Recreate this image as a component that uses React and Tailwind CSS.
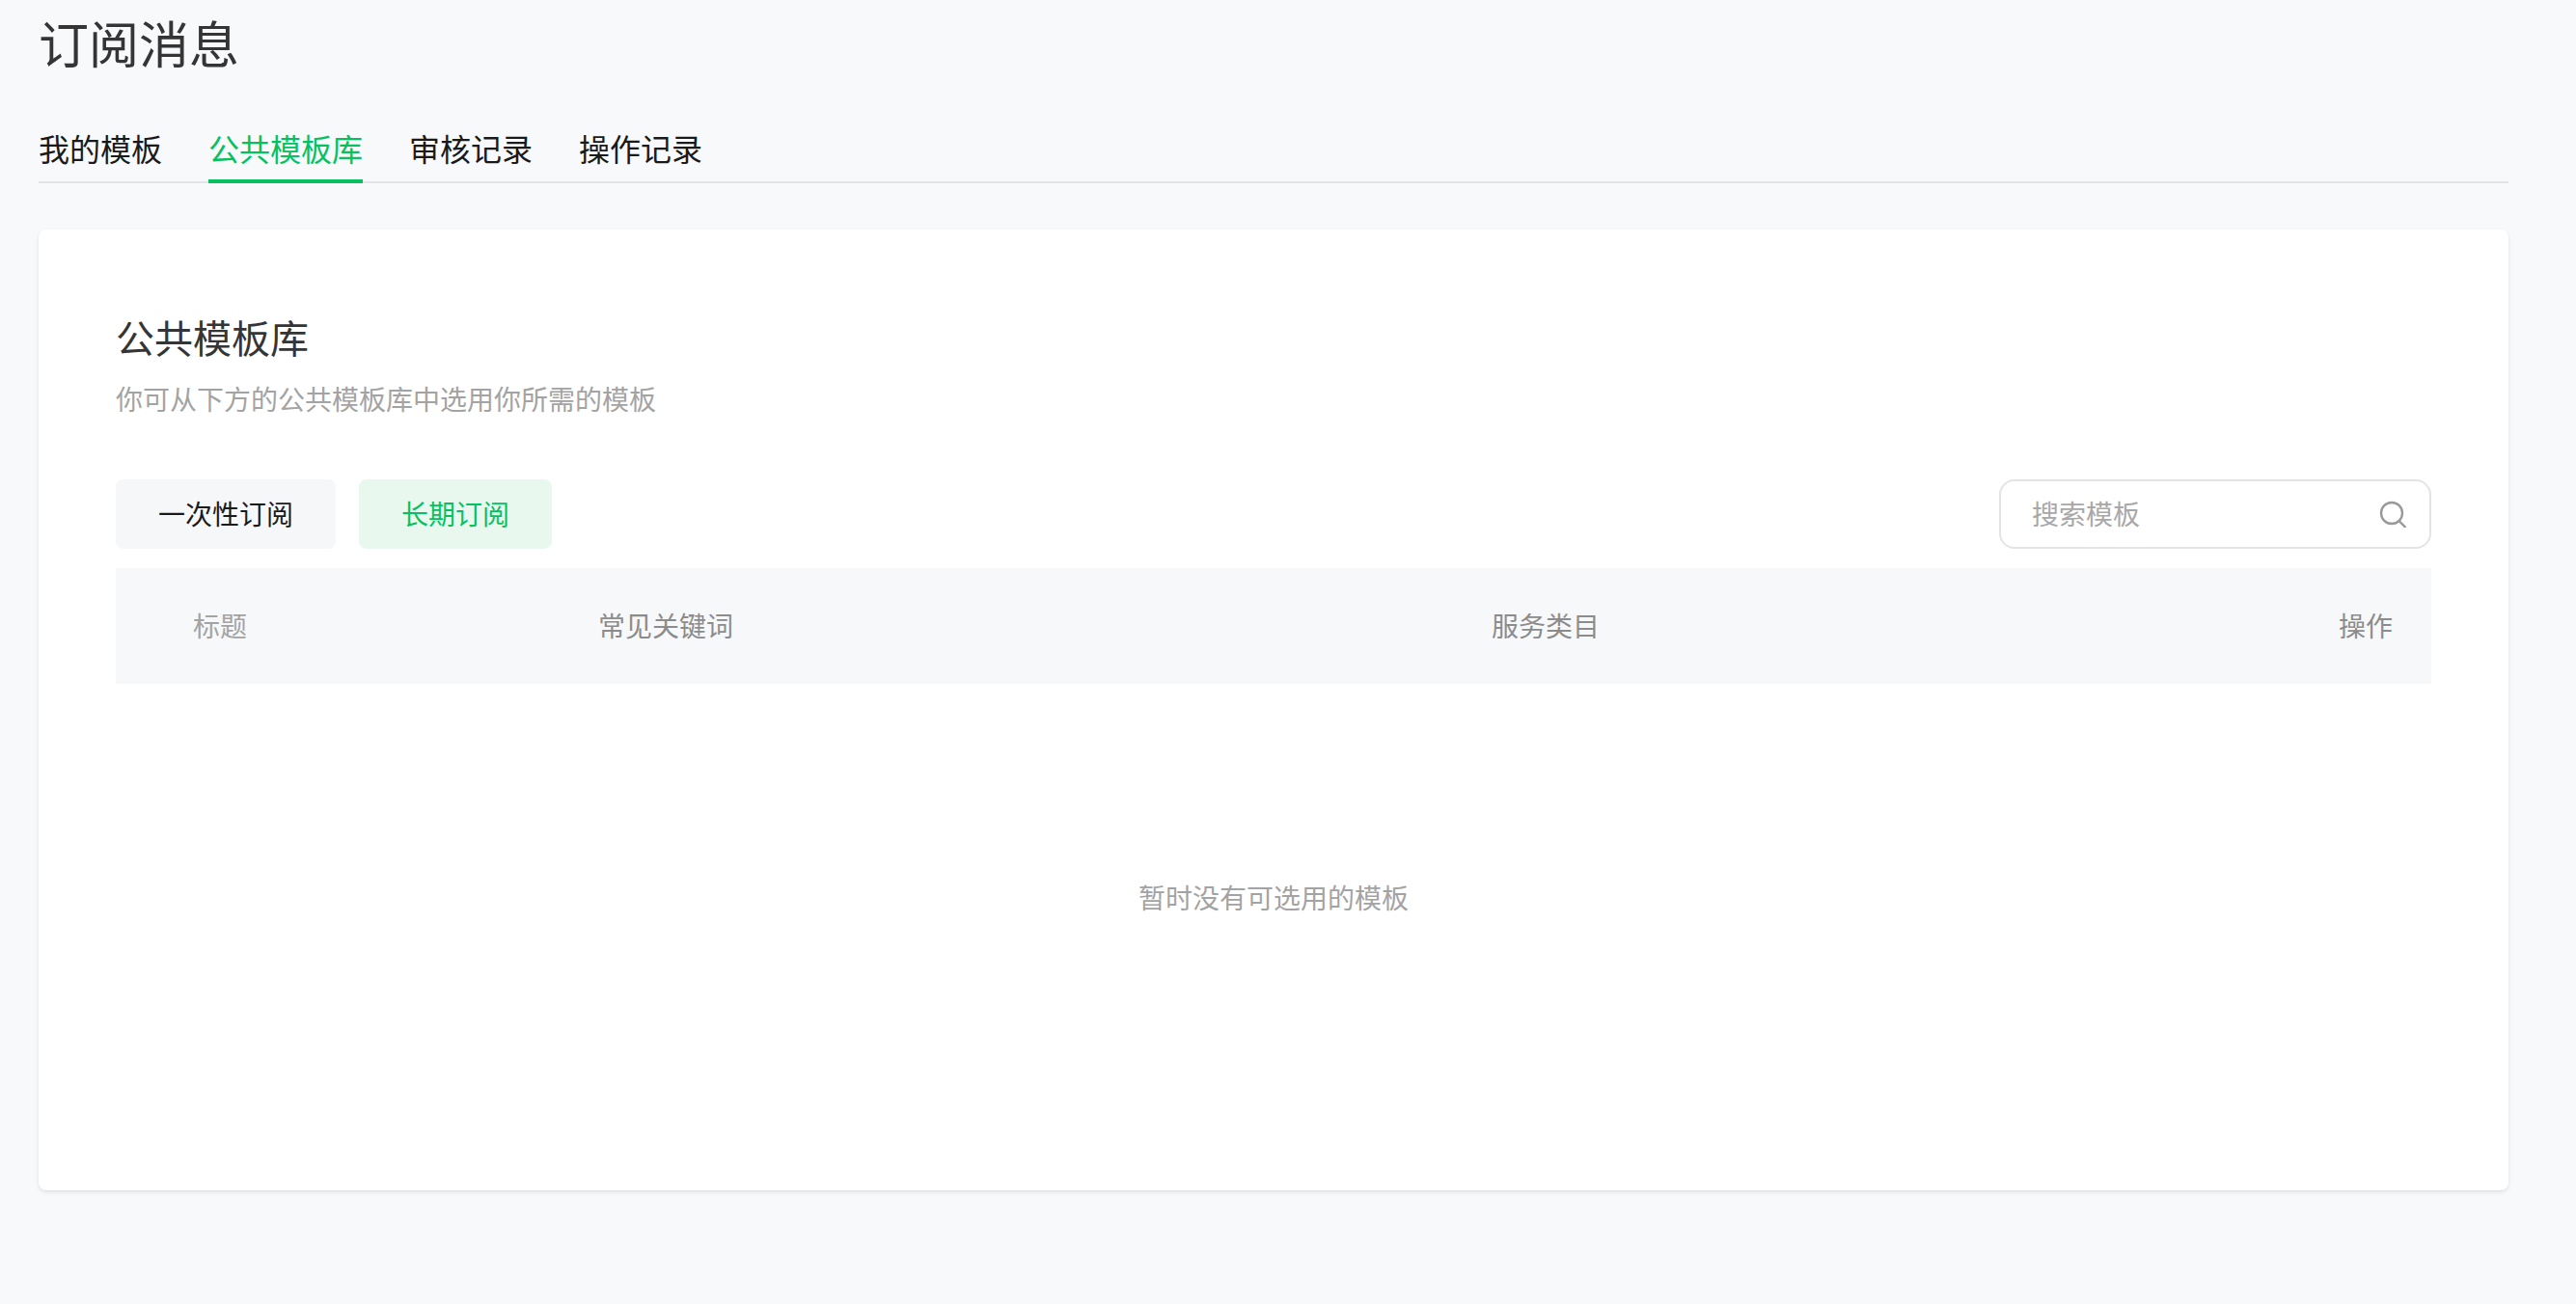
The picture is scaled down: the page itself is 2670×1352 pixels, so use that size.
const fontFamily = "font-['Noto_Sans_CJK_SC','Noto_Sans',sans-serif]"

function Tabs() {
  const tabs = ['我的模板', '公共模板库', '审核记录', '操作记录']

  return (
    <nav className="mt-[42px] flex h-[68px] gap-[48px] border-b-2 border-[#e2e4e8]">
      {tabs.map((tab) => {
        const isActive = tab === '公共模板库'
        return (
          <span
            key={tab}
            className={
              isActive
                ? 'h-[68px] border-b-4 border-[#07c160] text-[32px] leading-[62px] text-[#07c160]'
                : 'h-[68px] text-[32px] leading-[62px] text-[#1a1a1a]'
            }
          >
            {tab}
          </span>
        )
      })}
    </nav>
  )
}

function SearchIcon() {
  return (
    <svg className="h-[28px] w-[28px]" viewBox="0 0 28 28" fill="none" stroke="#999999" strokeWidth="2.4">
      <circle cx="13" cy="13" r="11" />
      <path d="M20.5 21 L27 27.5" strokeLinecap="round" />
    </svg>
  )
}

function App() {
  return (
    <div className={`${fontFamily} h-[1352px] overflow-hidden bg-[#f8f9fb] px-[40px] pr-[70px]`}>
      <h1 className="pt-[8px] text-[52px] leading-[72px] font-normal text-[#353535]">订阅消息</h1>
      <Tabs />

      <section className="mt-[48px] h-[996px] rounded-[8px] bg-white px-[80px] pt-[83px] shadow-[0_2px_4px_rgba(0,0,0,0.1)]">
        <h2 className="text-[40px] leading-[56px] font-normal text-[#353535]">公共模板库</h2>
        <p className="mt-[16px] text-[28px] leading-[40px] text-[#a3a3a3]">
          你可从下方的公共模板库中选用你所需的模板
        </p>

        <div className="mt-[64px] flex items-center justify-between">
          <div className="flex gap-[24px]">
            <button className="flex h-[72px] w-[228px] items-center justify-center rounded-[8px] bg-[#f6f7f9] pb-[2px] text-[28px] text-[#1a1a1a]" type="button">
              一次性订阅
            </button>
            <button className="flex h-[72px] w-[200px] items-center justify-center rounded-[8px] bg-[#e8f8ef] pb-[2px] text-[28px] text-[#07c160]" type="button">
              长期订阅
            </button>
          </div>
          <div className="flex h-[72px] w-[448px] items-center justify-between rounded-[16px] border-2 border-[#e4e4e4] pr-[24px] pl-[32px]">
            <span className="pb-[2px] text-[28px] text-[#a8a8a8]">搜索模板</span>
            <SearchIcon />
          </div>
        </div>

        <div className="mt-[20px] grid h-[120px] grid-cols-[500px_926px_1fr_auto] items-center bg-[#f7f8fa] pb-[2px] text-[28px]">
          <span className="pl-[80px] text-[#a3a3a3]">标题</span>
          <span className="text-[#8c8c8c]">常见关键词</span>
          <span className="text-[#8c8c8c]">服务类目</span>
          <span className="pr-[40px] text-right text-[#8c8c8c]">操作</span>
        </div>

        <p className="pt-[201px] text-center text-[28px] leading-[40px] text-[#a3a3a3]">暂时没有可选用的模板</p>
      </section>
    </div>
  )
}

export default App
